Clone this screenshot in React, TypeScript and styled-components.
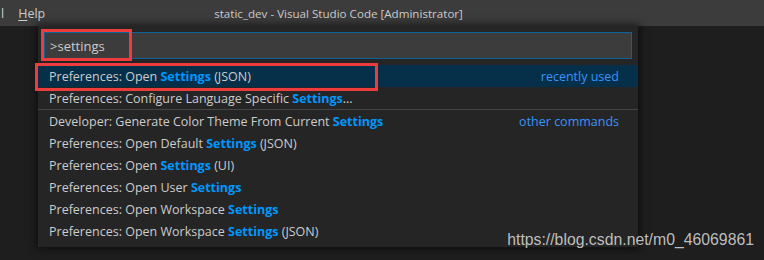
import React from 'react'
import styled, { createGlobalStyle } from 'styled-components'

const GlobalStyle = createGlobalStyle`
    html, body {
        margin: 0;
        padding: 0;
        background: #1e1e1e;
    }
    body {
        width: 764px;
        height: 260px;
        overflow: hidden;
        font-family: 'Open Sans', 'Noto Sans', sans-serif;
        -webkit-font-smoothing: antialiased;
    }
`

const Screen = styled.div`
    position: relative;
    width: 764px;
    height: 260px;
    overflow: hidden;
    background: #1e1e1e;
`

const TitleBar = styled.div`
    display: flex;
    align-items: center;
    height: 26px;
    padding-left: 1px;
    background: #3c3c3c;
    color: #cccccc;
    font-size: 12.5px;
    white-space: nowrap;
`

const MenuItem = styled.span<{ gap?: number }>`
    margin-left: ${({ gap }) => gap ?? 0}px;
`

const Mnemonic = styled.span`
    text-decoration: underline;
    text-underline-offset: 2px;
`

const WindowTitle = styled.span`
    margin-left: 169px;
    font-size: 11.6px;
`

const Workbench = styled.div`
    display: flex;
    height: 234px;
`

const Gutter = styled.div`
    width: 38px;
    flex: none;
`

const Palette = styled.div`
    width: 600px;
    flex: none;
    align-self: flex-start;
    background: #252526;
    box-shadow: 0 0 8px 2px rgba(0, 0, 0, 0.55);
    padding: 6px 0 5px;
    position: relative;
    z-index: 1;
`

const InputRow = styled.div`
    padding: 0 6px;
`

const Input = styled.div`
    height: 25px;
    display: flex;
    align-items: center;
    padding-left: 5px;
    background: #3c3c3c;
    border: 1px solid #0e639c;
    color: #cccccc;
    font-size: 13px;
`

const List = styled.div`
    margin-top: 6px;
`

const Row = styled.div<{ active?: boolean; divided?: boolean }>`
    display: flex;
    align-items: center;
    justify-content: space-between;
    height: 22px;
    padding: 0 19px 0 11px;
    background: ${({ active }) => (active ? '#062f4a' : 'transparent')};
    border-top: ${({ divided }) => (divided ? '1px solid #454545' : 'none')};
    color: #cccccc;
    font-size: 12.5px;
    white-space: nowrap;
`

const Match = styled.span`
    color: #0097fb;
    font-weight: 700;
`

const Tag = styled.span`
    color: #3794ff;
`

const Annotation = styled.div<{ x: number; y: number; w: number; h: number }>`
    position: absolute;
    left: ${({ x }) => x}px;
    top: ${({ y }) => y}px;
    width: ${({ w }) => w}px;
    height: ${({ h }) => h}px;
    box-sizing: border-box;
    border: 3px solid #ee3b3b;
    z-index: 5;
`

const Watermark = styled.div`
    position: absolute;
    right: 10px;
    bottom: 11px;
    color: rgba(220, 220, 220, 0.85);
    font-family: 'Liberation Sans', Arial, sans-serif;
    font-size: 15.8px;
    z-index: 6;
`

type Command = {
    before: string
    after?: string
    tag?: string
    active?: boolean
    divided?: boolean
}

const commands: Command[] = [
    { before: 'Preferences: Open ', after: ' (JSON)', tag: 'recently used', active: true },
    { before: 'Preferences: Configure Language Specific ', after: '...' },
    { before: 'Developer: Generate Color Theme From Current ', tag: 'other commands', divided: true },
    { before: 'Preferences: Open Default ', after: ' (JSON)' },
    { before: 'Preferences: Open ', after: ' (UI)' },
    { before: 'Preferences: Open User ' },
    { before: 'Preferences: Open Workspace ' },
    { before: 'Preferences: Open Workspace ', after: ' (JSON)' },
]

export default function App() {
    return (
        <Screen>
            <GlobalStyle />
            <TitleBar>
                <MenuItem>l</MenuItem>
                <MenuItem gap={14}>
                    <Mnemonic>H</Mnemonic>elp
                </MenuItem>
                <WindowTitle>static_dev - Visual Studio Code [Administrator]</WindowTitle>
            </TitleBar>
            <Workbench>
                <Gutter />
                <Palette>
                    <InputRow>
                        <Input>&gt;settings</Input>
                    </InputRow>
                    <List>
                        {commands.map((c, i) => (
                            <Row key={i} active={c.active} divided={c.divided}>
                                <span>
                                    {c.before}
                                    <Match>Settings</Match>
                                    {c.after}
                                </span>
                                {c.tag && <Tag>{c.tag}</Tag>}
                            </Row>
                        ))}
                    </List>
                </Palette>
            </Workbench>
            <Annotation x={41} y={29} w={91} h={32} />
            <Annotation x={35} y={63} w={343} h={28} />
            <Watermark>https://blog.csdn.net/m0_46069861</Watermark>
        </Screen>
    )
}
